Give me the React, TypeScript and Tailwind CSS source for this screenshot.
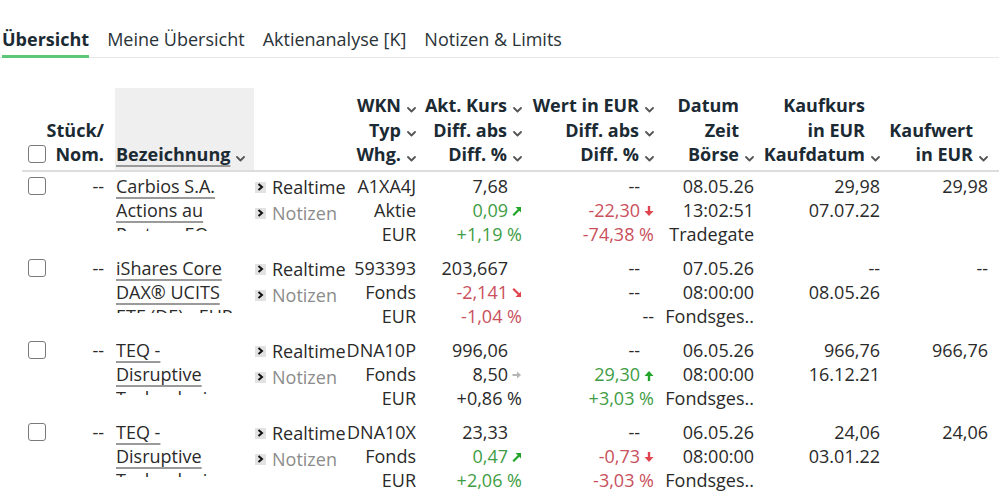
import React from "react";

const GREEN = "text-[#3f9d45]";
const RED = "text-[#c9505c]";

function Chevron({ visible = true }: { visible?: boolean }) {
  return (
    <span className="w-[15px] flex justify-end items-end self-stretch pb-[5px]">
      {visible && (
        <svg width="9" height="6" viewBox="0 0 9 6">
          <path d="M1 1 L4.5 4.5 L8 1" fill="none" stroke="#555" strokeWidth="1.8" strokeLinecap="round" strokeLinejoin="round" />
        </svg>
      )}
    </span>
  );
}

function HLine({ text, sort = false, none = false }: { text: string; sort?: boolean; none?: boolean }) {
  return (
    <div className="flex justify-end h-[24.5px] leading-[24.5px] whitespace-nowrap">
      <span>{text}</span>
      {!none && <Chevron visible={sort} />}
    </div>
  );
}

type Arrow = "upright" | "down" | "downright" | "up" | "right" | null;

function ArrowIcon({ kind }: { kind: Arrow }) {
  if (!kind) return null;
  if (kind === "upright")
    return (
      <svg width="10" height="10" viewBox="0 0 10 10">
        <path d="M2 8.5 L7 3.5" stroke="#22a52a" strokeWidth="2.2" strokeLinecap="square" />
        <polygon points="3.5,1 9,1 9,6.5" fill="#22a52a" />
      </svg>
    );
  if (kind === "downright")
    return (
      <svg width="10" height="10" viewBox="0 0 10 10">
        <path d="M2 1.5 L7 6.5" stroke="#e0454f" strokeWidth="2.2" strokeLinecap="square" />
        <polygon points="3.5,9 9,9 9,3.5" fill="#e0454f" />
      </svg>
    );
  if (kind === "down")
    return (
      <svg width="10" height="11" viewBox="0 0 10 11">
        <path d="M5 1 L5 6" stroke="#e0454f" strokeWidth="2.4" strokeLinecap="square" />
        <polygon points="0.5,5 9.5,5 5,10" fill="#e0454f" />
      </svg>
    );
  if (kind === "up")
    return (
      <svg width="10" height="11" viewBox="0 0 10 11">
        <path d="M5 10 L5 5" stroke="#22a52a" strokeWidth="2.4" strokeLinecap="square" />
        <polygon points="0.5,6 9.5,6 5,1" fill="#22a52a" />
      </svg>
    );
  return (
    <svg width="10" height="10" viewBox="0 0 10 10">
      <path d="M1.5 5 L6 5" stroke="#b5b5b5" strokeWidth="2" strokeLinecap="square" />
      <polygon points="5,1.5 9,5 5,8.5" fill="#b5b5b5" />
    </svg>
  );
}

function ValLine({ text, color = "", arrow = null, slot = true }: { text: string; color?: string; arrow?: Arrow; slot?: boolean }) {
  return (
    <div className="flex justify-end items-center h-[24px] leading-[24px] whitespace-nowrap">
      <span className={color}>{text}</span>
      {slot && (
        <span className="w-[14px] flex justify-end items-center pt-[2px]">
          <ArrowIcon kind={arrow} />
        </span>
      )}
    </div>
  );
}

function Plain({ lines }: { lines: string[] }) {
  return (
    <div className="flex flex-col">
      {lines.map((l, i) => (
        <div key={i} className="h-[24px] leading-[24px] text-right whitespace-nowrap">
          {l}
        </div>
      ))}
    </div>
  );
}

function Checkbox() {
  return <div className="w-[18px] h-[18px] rounded-[3px] border-[1.5px] border-[#7a7a7a] bg-white" />;
}

function SmallIcon() {
  return (
    <span className="inline-flex w-[11px] h-[11px] bg-[#e2e2e2] items-center justify-center mr-[6px]">
      <svg width="7" height="8" viewBox="0 0 7 8">
        <path d="M1.5 1 L5 4 L1.5 7" fill="none" stroke="#111" strokeWidth="2" />
      </svg>
    </span>
  );
}

type Row = {
  name: string;
  wkn: string;
  typ: string;
  kurs: [string, string, string];
  kursColor: string;
  kursPctColor: string;
  kursArrow: Arrow;
  wert: [string, string, string];
  wertColor: string;
  wertArrow: Arrow;
  datum: [string, string, string];
  kaufkurs: [string, string];
  kaufwert: string;
};

const rows: Row[] = [
  {
    name: "Carbios S.A. Actions au Porteur EO -,70",
    wkn: "A1XA4J",
    typ: "Aktie",
    kurs: ["7,68", "0,09", "+1,19 %"],
    kursColor: GREEN,
    kursPctColor: GREEN,
    kursArrow: "upright",
    wert: ["--", "-22,30", "-74,38 %"],
    wertColor: RED,
    wertArrow: "down",
    datum: ["08.05.26", "13:02:51", "Tradegate"],
    kaufkurs: ["29,98", "07.07.22"],
    kaufwert: "29,98",
  },
  {
    name: "iShares Core DAX® UCITS ETF (DE) - EUR",
    wkn: "593393",
    typ: "Fonds",
    kurs: ["203,667", "-2,141", "-1,04 %"],
    kursColor: RED,
    kursPctColor: RED,
    kursArrow: "downright",
    wert: ["--", "--", "--"],
    wertColor: "",
    wertArrow: null,
    datum: ["07.05.26", "08:00:00", "Fondsges.."],
    kaufkurs: ["--", "08.05.26"],
    kaufwert: "--",
  },
  {
    name: "TEQ - Disruptive Technologies Fund",
    wkn: "DNA10P",
    typ: "Fonds",
    kurs: ["996,06", "8,50", "+0,86 %"],
    kursColor: "",
    kursPctColor: "",
    kursArrow: "right",
    wert: ["--", "29,30", "+3,03 %"],
    wertColor: GREEN,
    wertArrow: "up",
    datum: ["06.05.26", "08:00:00", "Fondsges.."],
    kaufkurs: ["966,76", "16.12.21"],
    kaufwert: "966,76",
  },
  {
    name: "TEQ - Disruptive Technologies Fund",
    wkn: "DNA10X",
    typ: "Fonds",
    kurs: ["23,33", "0,47", "+2,06 %"],
    kursColor: GREEN,
    kursPctColor: GREEN,
    kursArrow: "upright",
    wert: ["--", "-0,73", "-3,03 %"],
    wertColor: RED,
    wertArrow: "down",
    datum: ["06.05.26", "08:00:00", "Fondsges.."],
    kaufkurs: ["24,06", "03.01.22"],
    kaufwert: "24,06",
  },
];

const GRID = "grid grid-cols-[28px_65px_139px_92px_70px_106px_132px_100px_126px_108px_1fr]";

export default function App() {
  return (
    <div
      className="w-[999px] h-[491px] overflow-hidden bg-white text-[18px] text-[#2a2a2a]"
      style={{ fontFamily: '"Open Sans", "Noto Sans", sans-serif' }}
    >
      {/* Tabs */}
      <div className="pt-[27px] flex gap-[18px] pl-[2px] border-b border-[#e8e8e8] leading-[24px]">
        <div className="font-bold text-[#1b2a33] pb-[3px] border-b-[3px] border-[#5cc877] -mb-px">Übersicht</div>
        <div className="text-[#2a3338] pb-[6px]">Meine Übersicht</div>
        <div className="text-[#2a3338] pb-[6px]">Aktienanalyse [K]</div>
        <div className="text-[#2a3338] pb-[6px]">Notizen &amp; Limits</div>
      </div>

      {/* Table */}
      <div className="ml-[22px] mt-[30px]">
        {/* Header */}
        <div className={`${GRID} font-bold text-[#1b2a33] border-b-2 border-[#dddddd] mb-[2px]`}>
          <div className="flex flex-col justify-end pb-[3.5px]">
            <div className="h-[24.5px] flex items-start pt-[2.5px] pl-[6px]">
              <Checkbox />
            </div>
          </div>
          <div className="flex flex-col justify-end pt-[5px] pb-[3.5px] pr-[11px]">
            <HLine text="Stück/" none />
            <HLine text="Nom." none />
          </div>
          <div className="flex flex-col justify-end pt-[5px] pb-[3.5px] bg-[#efefef] pl-px">
            <div className="flex h-[24.5px] leading-[24.5px] whitespace-nowrap">
              <span className="underline decoration-[#9a9a9a] decoration-[1.5px] underline-offset-[4px]">Bezeichnung</span>
              <Chevron />
            </div>
          </div>
          <div />
          <div className="flex flex-col justify-end pt-[5px] pb-[3.5px]">
            <HLine text="WKN" sort />
            <HLine text="Typ" sort />
            <HLine text="Whg." sort />
          </div>
          <div className="flex flex-col justify-end pt-[5px] pb-[3.5px]">
            <HLine text="Akt. Kurs" sort />
            <HLine text="Diff. abs" sort />
            <HLine text="Diff. %" sort />
          </div>
          <div className="flex flex-col justify-end pt-[5px] pb-[3.5px]">
            <HLine text="Wert in EUR" sort />
            <HLine text="Diff. abs" sort />
            <HLine text="Diff. %" sort />
          </div>
          <div className="flex flex-col justify-end pt-[5px] pb-[3.5px]">
            <HLine text="Datum" />
            <HLine text="Zeit" />
            <HLine text="Börse" sort />
          </div>
          <div className="flex flex-col justify-end pt-[5px] pb-[3.5px]">
            <HLine text="Kaufkurs" />
            <HLine text="in EUR" />
            <HLine text="Kaufdatum" sort />
          </div>
          <div className="flex flex-col justify-end pt-[5px] pb-[3.5px]">
            <HLine text="Kaufwert" />
            <HLine text="in EUR" sort />
          </div>
          <div />
        </div>

        {/* Rows */}
        {rows.map((r, i) => (
          <div key={i} className={`${GRID} pb-[10px]`}>
            <div className="pl-[6px] pt-[3px]">
              <Checkbox />
            </div>
            <div className="pr-[11px] text-right leading-[24px]">--</div>
            <div className="pl-px">
              <div className="w-[122px] max-h-[57px] overflow-hidden leading-[24px]">
                <span className="underline decoration-[#9a9a9a] decoration-[1.5px] underline-offset-[4px]">{r.name}</span>
              </div>
            </div>
            <div className="pl-px leading-[26px] whitespace-nowrap">
              <div className="flex items-center">
                <SmallIcon />
                <span>Realtime</span>
              </div>
              <div className="flex items-center">
                <SmallIcon />
                <span className="text-[#8c8c8c]">Notizen</span>
              </div>
            </div>
            <Plain lines={[r.wkn, r.typ, "EUR"]} />
            <div className="flex flex-col">
              <ValLine text={r.kurs[0]} />
              <ValLine text={r.kurs[1]} color={r.kursColor} arrow={r.kursArrow} />
              <ValLine text={r.kurs[2]} color={r.kursPctColor} slot={false} />
            </div>
            <div className="flex flex-col">
              <ValLine text={r.wert[0]} />
              <ValLine text={r.wert[1]} color={r.wertColor} arrow={r.wertArrow} />
              <ValLine text={r.wert[2]} color={r.wertColor} slot={false} />
            </div>
            <Plain lines={r.datum} />
            <Plain lines={r.kaufkurs} />
            <Plain lines={[r.kaufwert]} />
            <div />
          </div>
        ))}
      </div>
    </div>
  );
}
